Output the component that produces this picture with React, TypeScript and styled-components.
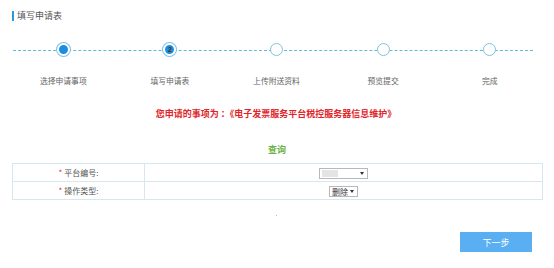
import React from "react";
import styled, { createGlobalStyle } from "styled-components";

const Global = createGlobalStyle`
  html, body { margin: 0; padding: 0; background: #fff; }
  body { font-family: "Noto Sans CJK SC", "Noto Sans", sans-serif; color: #555; }
`;

const Page = styled.div`
  width: 554px;
  height: 268px;
  display: flex;
  flex-direction: column;
  overflow: hidden;
`;

const Title = styled.div`
  display: flex;
  align-items: center;
  gap: 3px;
  padding: 9px 0 0 12px;
  height: 14px;
  font-size: 9px;
  line-height: 14px;
  color: #555;
  &::before {
    content: "";
    width: 2px;
    height: 10px;
    background: #2a96e0;
  }
`;

const Steps = styled.div`
  position: relative;
  margin: 20px 11px 0 10px;
  display: grid;
  grid-template-columns: repeat(5, 1fr);
  &::before {
    content: "";
    position: absolute;
    left: 3px;
    right: 10px;
    top: 7px;
    border-top: 1px dashed #62bcd8;
  }
`;

const Step = styled.div`
  display: flex;
  flex-direction: column;
  align-items: center;
  gap: 20px;
  position: relative;
`;

const Dot = styled.div<{ $state: "done" | "current" | "todo" }>`
  width: 13px;
  height: 13px;
  box-sizing: border-box;
  border-radius: 50%;
  display: flex;
  align-items: center;
  justify-content: center;
  font-size: 7px;
  font-weight: bold;
  color: #4a3a10;
  font-family: "Liberation Sans", sans-serif;
  background: ${(p) => (p.$state === "todo" ? "#fff" : "#1c8de0")};
  border: ${(p) => (p.$state === "todo" ? "1.5px solid #7cc4dc" : "2px solid #fff")};
  box-shadow: ${(p) => (p.$state === "todo" ? "none" : "0 0 0 1px #7cc4e6")};
`;

const StepLabel = styled.div`
  font-size: 7.8px;
  line-height: 10px;
  color: #666;
`;

const Notice = styled.div`
  margin-top: 22px;
  text-align: center;
  font-size: 9px;
  line-height: 12px;
  font-weight: bold;
  color: #e0242a;
  padding-right: 2px;
`;

const Query = styled.div`
  margin-top: 24px;
  text-align: center;
  font-size: 9px;
  line-height: 12px;
  font-weight: bold;
  color: #6ab344;
`;

const Table = styled.table`
  margin: 7px 0 0 12px;
  width: 531px;
  border-collapse: collapse;
  font-size: 8px;
  color: #555;
`;

const LabelCell = styled.td`
  width: 131px;
  height: 17px;
  padding: 0;
  border: 1px solid #d8e6ee;
  text-align: center;
  line-height: 10px;
  &::before {
    content: "*";
    color: #e0242a;
    margin-right: 2px;
  }
`;

const ValueCell = styled.td`
  padding: 0;
  height: 17px;
  border: 1px solid #d8e6ee;
  text-align: center;
  vertical-align: middle;
`;

const Select = styled.div<{ $w: number }>`
  display: inline-flex;
  align-items: center;
  justify-content: space-between;
  box-sizing: border-box;
  width: ${(p) => p.$w}px;
  height: 11px;
  border: 1px solid #b8b8b8;
  background: #fff;
  vertical-align: middle;
  padding: 0 3px 0 2px;
  font-size: 8px;
  line-height: 9px;
  color: #333;
`;

const Blur = styled.span`
  width: 16px;
  height: 7px;
  background: #e4e4e4;
`;

const Caret = styled.span`
  width: 0;
  height: 0;
  border-left: 2.5px solid transparent;
  border-right: 2.5px solid transparent;
  border-top: 3px solid #333;
`;

const Tiny = styled.div`
  margin: 15px 0 0 276px;
  width: 1px;
  height: 1px;
  background: #bbb;
`;

const Footer = styled.div`
  display: flex;
  justify-content: flex-end;
  padding: 16px 22px 0 0;
`;

const NextButton = styled.button`
  width: 72px;
  height: 20px;
  border: none;
  padding: 0;
  background: #5aaef2;
  color: #fff;
  font-family: "Noto Sans CJK SC", sans-serif;
  font-size: 9px;
`;

const steps: { label: string; state: "done" | "current" | "todo"; n: string }[] = [
  { label: "选择申请事项", state: "done", n: "" },
  { label: "填写申请表", state: "current", n: "2" },
  { label: "上传附送资料", state: "todo", n: "" },
  { label: "预览提交", state: "todo", n: "" },
  { label: "完成", state: "todo", n: "" },
];

export default function App() {
  return (
    <Page>
      <Global />
      <Title>填写申请表</Title>
      <Steps>
        {steps.map((s) => (
          <Step key={s.label}>
            <Dot $state={s.state}>{s.n}</Dot>
            <StepLabel>{s.label}</StepLabel>
          </Step>
        ))}
      </Steps>
      <Notice>您申请的事项为 ：《电子发票服务平台税控服务器信息维护》</Notice>
      <Query>查询</Query>
      <Table>
        <tbody>
          <tr>
            <LabelCell>平台编号:</LabelCell>
            <ValueCell>
              <Select $w={49}>
                <Blur />
                <Caret />
              </Select>
            </ValueCell>
          </tr>
          <tr>
            <LabelCell>操作类型:</LabelCell>
            <ValueCell>
              <Select $w={29}>
                <span>删除</span>
                <Caret />
              </Select>
            </ValueCell>
          </tr>
        </tbody>
      </Table>
      <Tiny />
      <Footer>
        <NextButton>下一步</NextButton>
      </Footer>
    </Page>
  );
}
